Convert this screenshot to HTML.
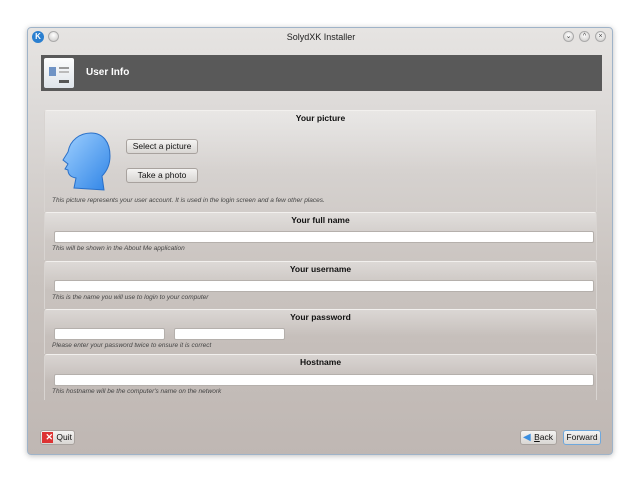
<!DOCTYPE html>
<html><head><meta charset="utf-8"><style>
*{margin:0;padding:0;box-sizing:border-box}
body{width:640px;height:482px;background:#fff;font-family:"Liberation Sans",sans-serif;position:relative;overflow:hidden}
.win{position:absolute;left:27px;top:27px;width:586px;height:428px;border:1px solid #9fb3c8;border-radius:4px;background:linear-gradient(#e6e4e2 0,#dcd9d7 90px,#c9c3bf 250px,#bfb7b3 428px);box-shadow:0 1px 6px rgba(0,0,0,.25)}
.a{position:absolute}
.title{left:0;width:586px;top:4px;text-align:center;font-size:9px;color:#222}
.hdr{left:13px;top:27px;width:561px;height:36px;background:#595959}
.hdr span{position:absolute;left:45px;top:12px;color:#fff;font-weight:bold;font-size:10px}
.sec{position:absolute;left:16px;width:553px;border-top:1px solid #f2f0ee;border-left:1px solid #d8d4d1;border-right:1px solid #d8d4d1;border-radius:3px 3px 0 0;background:linear-gradient(rgba(255,255,255,.35),rgba(255,255,255,0) 60%)}
.st{position:absolute;left:0;width:100%;top:2px;text-align:center;font-weight:bold;font-size:8.5px;color:#111}
.in{position:absolute;height:12px;background:#fff;border:1px solid #b5b0ac;border-radius:2px}
.hint{position:absolute;left:7px;font-style:italic;font-size:6.5px;color:#444}
.btn{position:absolute;height:15px;border:1px solid #a8a29e;border-radius:3px;background:linear-gradient(#f4f3f2,#d9d6d3);font-size:8.5px;color:#111;text-align:center;line-height:13px}
.cb{position:absolute;width:11px;height:11px;border-radius:50%;background:radial-gradient(circle at 50% 35%,#fff,#c9c7c5);border:1px solid #aaa;font-size:7px;line-height:9px;text-align:center;color:#444}
</style></head><body>
<div class="win">
 <div class="a" style="left:4px;top:3px;width:12px;height:12px;border-radius:50%;background:#2a7fd0;color:#fff;font-size:8px;font-weight:bold;text-align:center;line-height:12px">K</div>
 <div class="cb" style="left:20px;top:3px"></div>
 <div class="a title">SolydXK Installer</div>
 <div class="cb" style="left:535px;top:3px">⌄</div>
 <div class="cb" style="left:551px;top:3px">^</div>
 <div class="cb" style="left:567px;top:3px">×</div>
 <div class="a hdr">
  <div class="a" style="left:3px;top:3px;width:30px;height:30px;background:linear-gradient(#fdfdfd,#dfe4ea);border-radius:2px">
   <div class="a" style="left:5px;top:9px;width:7px;height:9px;background:#6f93c5"></div>
   <div class="a" style="left:15px;top:9px;width:10px;height:2px;background:#999"></div>
   <div class="a" style="left:15px;top:13px;width:10px;height:2px;background:#bbb"></div>
   <div class="a" style="left:15px;top:22px;width:10px;height:3px;background:#555"></div>
  </div>
  <span>User Info</span>
 </div>
 <div class="sec" style="top:82px;height:102px">
  <div class="st">Your picture</div>
  <svg class="a" style="left:15px;top:21px" width="52" height="60" viewBox="0 0 52 60"><defs><linearGradient id="g" x1="0" y1="0" x2="1" y2="1"><stop offset="0" stop-color="#9fd0ff"/><stop offset="1" stop-color="#2f84e6"/></linearGradient></defs><path d="M14 56 L16 46 C10 45 8 42 8 38 L5 37 L8 32 L3 28 L8 20 C10 8 20 1 31 1 C43 1 50 10 50 24 C50 34 46 40 42 44 L44 58 Z" fill="url(#g)" stroke="#2a70c8"/></svg>
  <div class="btn" style="left:81px;top:28px;width:72px">Select a picture</div>
  <div class="btn" style="left:81px;top:57px;width:72px">Take a photo</div>
  <div class="hint" style="top:86px">This picture represents your user account. It is used in the login screen and a few other places.</div>
 </div>
 <div class="sec" style="top:184px;height:48px">
  <div class="st">Your full name</div>
  <div class="in" style="left:9px;top:18px;width:540px"></div>
  <div class="hint" style="top:32px">This will be shown in the About Me application</div>
 </div>
 <div class="sec" style="top:233px;height:48px">
  <div class="st">Your username</div>
  <div class="in" style="left:9px;top:18px;width:540px"></div>
  <div class="hint" style="top:32px">This is the name you will use to login to your computer</div>
 </div>
 <div class="sec" style="top:281px;height:45px">
  <div class="st">Your password</div>
  <div class="in" style="left:9px;top:18px;width:111px"></div>
  <div class="in" style="left:129px;top:18px;width:111px"></div>
  <div class="hint" style="top:32px">Please enter your password twice to ensure it is correct</div>
 </div>
 <div class="sec" style="top:326px;height:46px">
  <div class="st">Hostname</div>
  <div class="in" style="left:9px;top:19px;width:540px"></div>
  <div class="hint" style="top:33px">This hostname will be the computer's name on the network</div>
 </div>
 <div class="btn" style="left:12px;top:402px;width:35px;text-align:right;padding-right:2px">
  <div class="a" style="left:1px;top:1px;width:11px;height:11px;background:#d33;color:#fff;font-size:9px;line-height:11px;font-weight:bold">✕</div>Quit</div>
 <div class="btn" style="left:492px;top:402px;width:37px;text-align:right;padding-right:3px">
  <div class="a" style="left:2px;top:1px;color:#3a8ee0;font-size:10px;line-height:11px">◀</div><u>B</u>ack</div>
 <div class="btn" style="left:535px;top:402px;width:38px;border-color:#6fa8dc">Forward</div>
</div>
</body></html>
